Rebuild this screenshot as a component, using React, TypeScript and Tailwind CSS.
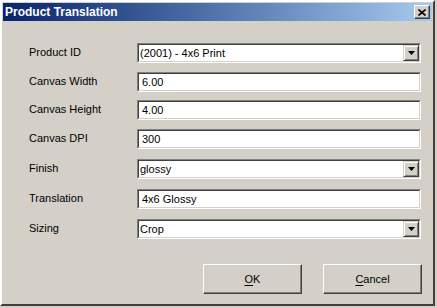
const font = { fontFamily: '"Liberation Sans", Arial, sans-serif' };

const Field = ({ value, combo }: { value: string; combo?: boolean }) => (
  <div className="flex h-[20px] w-[284px] items-stretch border border-t-[#808080] border-l-[#808080] border-b-white border-r-white">
    <div className="flex flex-1 items-center border border-t-[#404040] border-l-[#404040] border-b-[#d4d0c8] border-r-[#d4d0c8] bg-white">
      <span className={`${combo ? "pl-[1px]" : "pl-[3px]"} text-[11px] leading-none text-black`}>{value}</span>
      {combo && (
        <div className="ml-auto mr-0 flex h-[16px] w-[16px] items-center justify-center border border-t-[#d4d0c8] border-l-[#d4d0c8] border-b-[#404040] border-r-[#404040] bg-[#d4d0c8] shadow-[inset_1px_1px_0_#ffffff,inset_-1px_-1px_0_#808080]">
          <svg width="7" height="4" viewBox="0 0 7 4">
            <path d="M0 0h7L3.5 4z" fill="#000" />
          </svg>
        </div>
      )}
    </div>
  </div>
);

const rows = [
  { label: "Product ID", value: "(2001) - 4x6 Print", combo: true, mt: "mt-0" },
  { label: "Canvas Width", value: "6.00", mt: "mt-[9px]" },
  { label: "Canvas Height", value: "4.00", mt: "mt-[8px]" },
  { label: "Canvas DPI", value: "300", mt: "mt-[9px]" },
  { label: "Finish", value: "glossy", combo: true, mt: "mt-[10px]" },
  { label: "Translation", value: "4x6 Glossy", mt: "mt-[10px]" },
  { label: "Sizing", value: "Crop", combo: true, mt: "mt-[10px]" },
];

const Button = ({ children }: { children: React.ReactNode }) => (
  <button className="flex h-[30px] w-[99px] items-center justify-center border border-t-white border-l-white border-b-[#404040] border-r-[#404040] bg-[#d4d0c8] text-[11px] text-black shadow-[inset_-1px_-1px_0_#808080]">
    {children}
  </button>
);

export default function App() {
  return (
    <div style={font} className="h-[308px] w-[437px] overflow-hidden bg-[#d4d0c8]">
      <div className="flex h-[306px] w-[435px] flex-col border-2 border-t-white border-l-white border-b-[#404040] border-r-[#404040] p-px">
        <div className="flex h-[18px] items-center justify-between bg-gradient-to-r from-[#0a246a] to-[#a6caf0] pl-[2px] pr-[2px]">
          <span className="text-[12px] font-bold leading-none text-white">Product Translation</span>
          <div className="flex h-[14px] w-[16px] items-center justify-center border border-t-white border-l-white border-b-[#404040] border-r-[#404040] bg-[#d4d0c8] shadow-[inset_-1px_-1px_0_#808080]">
            <svg width="8" height="7" viewBox="0 0 8 7">
              <path d="M0.5 0.5L7.5 6.5M7.5 0.5L0.5 6.5" stroke="#000" strokeWidth="1.6" />
            </svg>
          </div>
        </div>
        <div className="flex flex-1 flex-col pl-[26px] pt-[22px]">
          {rows.map((row) => (
            <div key={row.label} className={`flex items-start ${row.mt}`}>
              <span className="w-[108px] pt-[2px] text-[11px] leading-[14px] text-black">{row.label}</span>
              <Field value={row.value} combo={row.combo} />
            </div>
          ))}
          <div className="mt-[25px] flex gap-[21px] pl-[174px]">
            <Button>
              <span className="underline underline-offset-2">O</span>K
            </Button>
            <Button>
              <span className="underline underline-offset-2">C</span>ancel
            </Button>
          </div>
        </div>
      </div>
    </div>
  );
}
